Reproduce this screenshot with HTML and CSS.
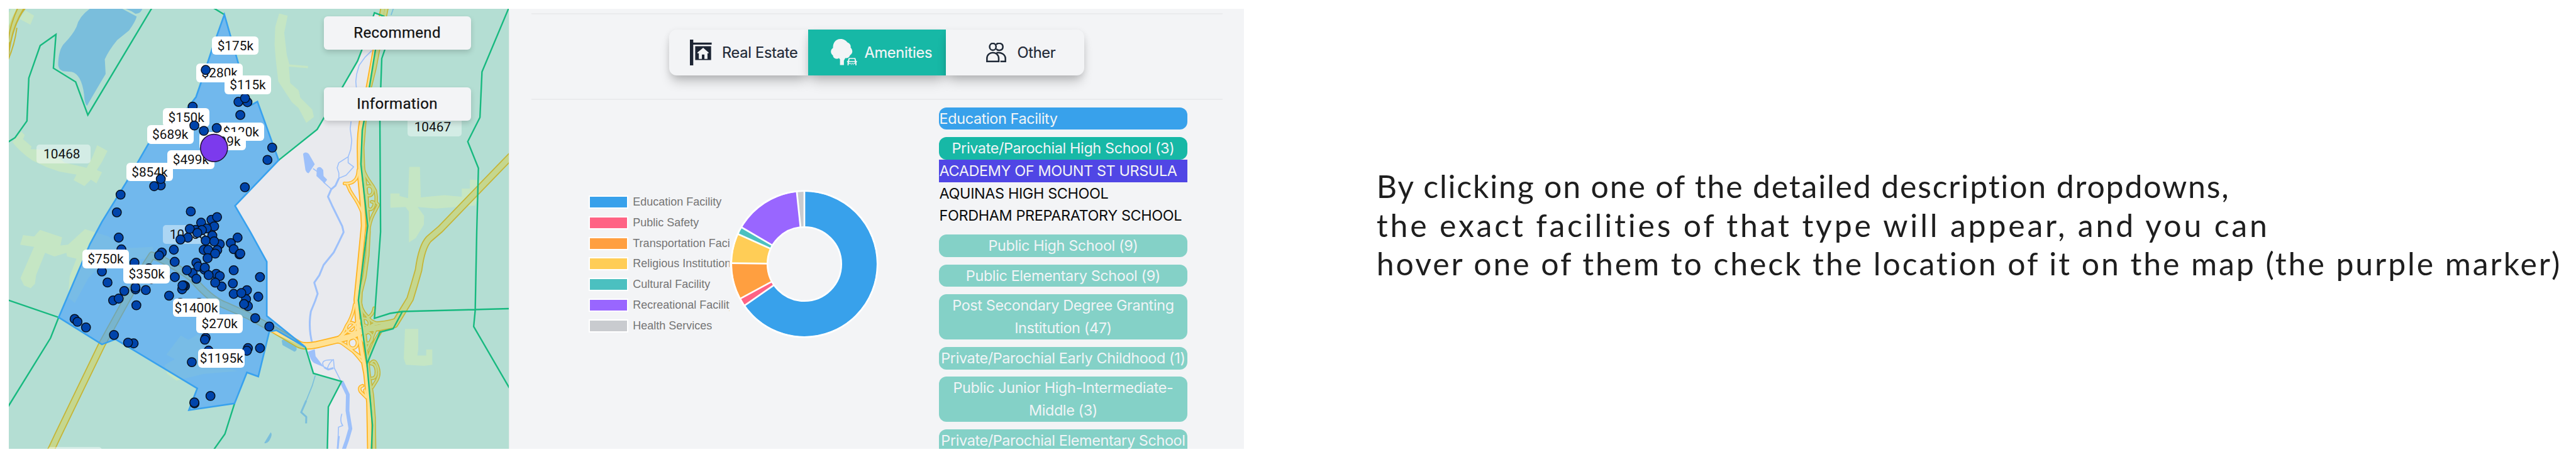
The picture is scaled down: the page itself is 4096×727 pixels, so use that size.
FILE: index.html
```html
<!DOCTYPE html>
<html lang="en">
<head>
<meta charset="utf-8">
<title>Neighborhood amenities</title>
<link rel="stylesheet" href="styles.css">
</head>
<body>
<main class="board">
  <section class="map">
    <svg class="layer" viewBox="51 58 2948 2979" preserveAspectRatio="none">
      <defs>
        <g id="wide">
          <path d="M3020 1045L2595 1550L2527 1617Q2485 1670 2467 1827L2442 1927L2417 2022L2372 2107L2325 2195L2237 2215L2157 2228L2067 2277L1977 2302L1867 2332Q1790 2350 1757 2327L1617 2232L1467 2137L1330 2067Q1240 2030 1130 1880Q1000 1770 895 1727L860 1790L600 2330L340 2947L300 3045"/>
        </g>
        <g id="main">
          <path d="M2260 40L2212 338L2172 590L2132 820Q2119 900 2119 1000L2122 1200Q2140 1400 2143 1527L2122 1777L2100 2027L2112 2227L2132 2377L2157 2527L2175 2727L2180 3045"/>
        </g>
        <g id="side">
          <path d="M2280 40L2227 338L2207 460L2179 590L2147 820L2135 1000L2139 1130L2160 1330L2172 1568L2165 1727L2147 1877L2125 1977L2122 2047L2150 2280L2172 2527L2192 2677L2202 2827L2205 3045"/>
          <path d="M2335 2165Q2280 2185 2230 2188T2160 2250"/>
        </g>
        <g id="ramps">
          <path d="M2030 1240Q2070 1245 2090 1220Q2110 1200 2112 1150M2048 1250Q2060 1290 2085 1330T2132 1430M2142 1150Q2160 1200 2180 1230T2212 1290Q2220 1330 2217 1370L2230 1385L2200 1450Q2178 1500 2172 1568M2190 1365Q2215 1365 2200 1400Q2185 1430 2165 1405"/>
          <ellipse cx="2175" cy="1290" rx="24" ry="33"/>
          <path d="M2090 2060Q2080 2140 2040 2210Q2015 2280 1980 2292M1985 2310Q2050 2320 2132 2445M2115 2170L1990 2300L2132 2420"/>
          <path d="M2120 2020Q2125 2100 2165 2140Q2190 2190 2250 2190T2335 2165M2165 2150Q2200 2130 2205 2085M2170 2420Q2200 2320 2240 2250M2150 2200L2210 2240L2165 2360"/>
          <ellipse cx="2069" cy="2217" rx="28" ry="34"/><ellipse cx="2079" cy="2320" rx="28" ry="36"/>
          <ellipse cx="2147" cy="2188" rx="30" ry="36"/><ellipse cx="2165" cy="2285" rx="30" ry="38"/>
          <path d="M2188 2455Q2205 2430 2218 2460Q2245 2520 2222 2570L2195 2620M2185 2460Q2215 2460 2218 2510Q2220 2560 2190 2560M2137 2610Q2110 2620 2125 2650L2160 2690L2150 2640"/>
        </g>
      </defs>
      <rect class="land" x="51" y="58" width="2948" height="2979"/>
      <g class="patch">
        <path d="M150 70L200 105L178 165L112 125ZM51 85L65 58H100L51 240ZM72 960L125 890L145 912L135 940L185 990L180 1008L225 1010L300 1020L380 1100L510 1135L545 1060L572 982L633 1020L600 1095L570 1150L600 1165L568 1240L535 1215L497 1258L433 1218L450 1180L350 1160L275 1130L190 1085Q110 1020 72 960Z"/>
        <path d="M118 1655L135 1590L200 1600L235 1555L365 1605L355 1660L400 1655L500 1550L555 1570L640 1600L720 1680L900 1670L905 1740L600 1790L520 1880L440 2050L400 2010L410 1870L450 1750L395 1735L390 1710L320 1735L265 1710L212 1860L205 1920L180 1950L140 1930L120 1880L200 1670Z"/>
        <path d="M980 2400L1065 2270L1110 2300L1170 2260L1230 2470L1400 2510L1200 2530L1040 2575L985 2530L970 2470L1030 2430Z"/>
        <path d="M1645 90L1695 105L1675 220L1690 370L1705 435L1815 445V460L1702 450L1710 560L1760 610L1770 660L1840 740L1850 790L1805 830L1760 730L1720 690L1680 620L1640 550L1625 400L1618 300L1622 180Z"/>
        <path d="M2412 1128H2475L2480 1335L2620 1320L2722 1330V1275H2770V1215L2850 1220L2800 1390L2570 1410L2462 1400L2500 1460L2498 1520L2450 1610L2410 1640V1430L2390 1400L2301 1405V1308H2355V1325L2405 1340Z"/>
        <path d="M2387 2225H2465V2365L2460 2405H2512V2365H2548V2468L2500 2475L2392 2468L2380 2425Z"/>
      </g>
      <g class="water">
        <path d="M528 58H720L805 110Q800 140 760 205L690 270Q640 340 617 400L622 500Q580 580 512 715Q497 700 495 640Q480 500 420 485L370 480Q340 465 342 430Q345 330 380 290Q430 230 450 180Q465 110 528 58Z"/>
        <path d="M740 58H838Q830 90 798 92L775 75Z"/>
        <path d="M1786 1040Q1800 1020 1820 1040L1855 1110L1820 1170Q1810 1175 1800 1150ZM1867 1140Q1885 1115 1905 1150L1907 1190L1928 1215L1912 1240L1865 1190Z"/>
        <path d="M1815 2380L1855 2362L1860 2410L1910 2485L1850 2455Q1830 2440 1815 2380ZM1660 2305Q1665 2290 1685 2305L1745 2345Q1755 2370 1735 2380L1665 2335ZM1595 2925Q1610 2940 1585 2985Q1570 3005 1557 2998Z"/>
      </g>
      <g class="stream">
        <path class="thin" d="M2192 340L2152 385L2117 440L2102 500L2097 550L2100 590M2069 820L2064 870L2073 950L2067 1010L2052 1060L1997 1100L1987 1135L1997 1170V1205M2052 1060V1100L2084 1128L2040 1185L1997 1205M1845 1140L1870 1160M1905 1230L1952 1278M2305 100L2318 58M1858 2540L1840 2610L1805 2710M1910 2485Q1880 2430 1960 2435Q1930 2470 1930 2500M1965 2430L1970 2490L2010 2580M2015 2800Q2000 2850 2020 2880L1995 2890L1990 3037"/>
        <path class="mid" d="M1997 1205L1977 1255L1952 1280L1933 1330L1957 1390L2017 1530L2025 1570L1997 1637L1967 1707L1907 1792L1882 1862L1852 1912L1872 1987L1857 2037L1832 2107Q1815 2220 1842 2330M1805 2710L1775 2790L1805 2820L1804 2865M1997 2950L1990 3037M1910 2485L1935 2500L1965 2490"/>
        <path class="thick" d="M2013 2581L2050 2670L2048 2780L2065 2900L2045 2980L2025 3045"/>
      </g>
      <g class="casing"><use href="#ramps" class="w5"/><use href="#wide" class="w12"/><use href="#side" class="w8"/><use href="#main" class="w9"/></g>
      <g class="asphalt"><use href="#ramps" class="n5"/><use href="#wide" class="n12"/><use href="#side" class="n8"/><use href="#main" class="n9"/></g>
      <path class="casing w5" d="M150 40Q65 150 40 400"/>
      <path class="asphalt n12" d="M125 40Q65 150 45 270"/>
      <path class="casing w2" d="M105 50Q55 170 45 300M98 190Q85 300 48 400"/>
      <path class="zones" fill-rule="evenodd" d="M51 58H2999V3037H51Z
        M2202 108L2207 85L2262 108L2212 340L2177 590L2145 820L2135 880L2127 1110L2167 1527L2112 2032L2163 2462L2195 2877L2189 3037H1929L1935 2753L2013 2581L1847 2526L1800 2349L1587 2243L1522 2548L1455 2520L1382 2730L1113 2775L1162 2628L680 2295L600 2330L345 2147L530 1650L600 1500L745 1230L875 970L1105 730L1155 655L1185 555L1250 330L1322 97L1405 430L1440 680L1480 710L1517 686L1642 1083L1869 875L1907 800L2017 590L2107 412L2132 338Z"/>
      <g class="border">
        <path d="M40 965L88 930L158 817L169 527L236 307L329 231L314 460L445 553L517 777L900 42M1240 40L1322 97M40 2027L345 2147L297 2287L45 2755M1382 2730L1325 2937L1255 3050"/>
        <path d="M1642 1083L1869 875L1907 800L2017 590L2107 412L2132 338L2207 85L2262 108L2212 340L2177 590L2145 820L2135 880L2127 1110L2167 1527L2112 2032L2163 2462L2195 2877L2189 3045M1800 2349L1847 2526L2013 2581L1935 2753L1929 3045"/>
        <path d="M2262 108L2285 200L2267 338L2250 395L2244 590L2239 820L2243 1568L2207 2153L2299 2120L2372 2107L3005 2088M2372 2107L2317 2224L2240 2247L2163 2462M3000 50L2841 485L2829 793L2757 957L2820 1137L2810 1568L2801 2100L2792 2209L3005 2630"/>
      </g>
      <path class="selected" d="M1322 97L1405 430L1440 680L1480 710L1517 686L1642 1083L1385 1392L1475 1568L1572 1770V2137L1800 2349L1630 2235L1587 2243L1522 2548L1455 2520L1382 2730L1113 2775L1162 2628L680 2295L600 2330L345 2147L530 1650L600 1500L745 1230L875 970L1105 730L1155 655L1185 555L1250 330Z"/>
    </svg>

    <span class="zip" style="--u:216;--v:981">10468</span>
    <span class="zip" style="--u:2402;--v:796">10467</span>
    <span class="zip" style="--u:960;--v:1525">10458</span>
    <span class="zip" style="--u:280;--v:3026"></span>

    <svg class="layer dots" viewBox="51 58 2948 2979" preserveAspectRatio="none">
      <defs><ellipse id="d" rx="26.5" ry="30.5"/></defs>
      <use href="#d" x="1458" y="690"/><use href="#d" x="1405" y="688"/><use href="#d" x="1444" y="663"/><use href="#d" x="1416" y="777"/><use href="#d" x="1135" y="720"/><use href="#d" x="710" y="1316"/><use href="#d" x="688" y="1436"/><use href="#d" x="1124" y="1430"/><use href="#d" x="1246" y="1486"/><use href="#d" x="1279" y="1468"/><use href="#d" x="1185" y="1506"/><use href="#d" x="1443" y="1266"/><use href="#d" x="1604" y="998"/><use href="#d" x="1576" y="1081"/>
      <use href="#d" x="1152" y="1555"/><use href="#d" x="1118" y="1548"/><use href="#d" x="1262" y="1531"/><use href="#d" x="1218" y="1545"/><use href="#d" x="1190" y="1556"/><use href="#d" x="1163" y="1575"/><use href="#d" x="1107" y="1607"/><use href="#d" x="1063" y="1620"/><use href="#d" x="1251" y="1593"/><use href="#d" x="1212" y="1627"/><use href="#d" x="1295" y="1651"/><use href="#d" x="1262" y="1632"/><use href="#d" x="1200" y="1690"/><use href="#d" x="1280" y="1692"/><use href="#d" x="1227" y="1690"/><use href="#d" x="1268" y="1715"/><use href="#d" x="1223" y="1746"/>
      <use href="#d" x="1400" y="1607"/><use href="#d" x="1360" y="1644"/><use href="#d" x="1377" y="1685"/><use href="#d" x="1411" y="1720"/><use href="#d" x="1416" y="1715"/><use href="#d" x="699" y="1607"/><use href="#d" x="715" y="1687"/><use href="#d" x="1024" y="1689"/><use href="#d" x="953" y="1708"/><use href="#d" x="937" y="1728"/><use href="#d" x="792" y="1777"/><use href="#d" x="877" y="1815"/><use href="#d" x="892" y="1887"/><use href="#d" x="1029" y="1771"/>
      <use href="#d" x="1157" y="1777"/><use href="#d" x="1135" y="1847"/><use href="#d" x="1168" y="1803"/><use href="#d" x="1205" y="1824"/><use href="#d" x="1207" y="1810"/><use href="#d" x="1101" y="1828"/><use href="#d" x="1274" y="1852"/><use href="#d" x="1229" y="1861"/><use href="#d" x="1295" y="1867"/><use href="#d" x="1157" y="1886"/><use href="#d" x="1306" y="1938"/><use href="#d" x="1268" y="1912"/><use href="#d" x="1377" y="1828"/><use href="#d" x="1372" y="1917"/><use href="#d" x="1532" y="1874"/><use href="#d" x="1030" y="1874"/>
      <use href="#d" x="600" y="1836"/><use href="#d" x="633" y="1911"/><use href="#d" x="732" y="1968"/><use href="#d" x="798" y="1957"/><use href="#d" x="798" y="1945"/><use href="#d" x="859" y="1962"/><use href="#d" x="666" y="2032"/><use href="#d" x="699" y="2020"/><use href="#d" x="803" y="2065"/><use href="#d" x="996" y="2000"/><use href="#d" x="1090" y="1935"/><use href="#d" x="1073" y="1957"/><use href="#d" x="1082" y="1930"/><use href="#d" x="1075" y="1931"/>
      <use href="#d" x="1377" y="1988"/><use href="#d" x="1455" y="1963"/><use href="#d" x="1450" y="2024"/><use href="#d" x="1422" y="1982"/><use href="#d" x="1522" y="2007"/><use href="#d" x="1461" y="2071"/><use href="#d" x="1438" y="2057"/><use href="#d" x="1504" y="2152"/><use href="#d" x="1587" y="2209"/><use href="#d" x="439" y="2158"/><use href="#d" x="456" y="2177"/><use href="#d" x="506" y="2215"/><use href="#d" x="671" y="2266"/><use href="#d" x="787" y="2323"/><use href="#d" x="754" y="2318"/>
      <use href="#d" x="1062" y="2049"/><use href="#d" x="1173" y="2049"/><use href="#d" x="1212" y="2285"/><use href="#d" x="1207" y="2298"/><use href="#d" x="1229" y="2372"/><use href="#d" x="1461" y="2355"/><use href="#d" x="1455" y="2373"/><use href="#d" x="1532" y="2355"/><use href="#d" x="1130" y="2450"/><use href="#d" x="1240" y="2679"/><use href="#d" x="1146" y="2729"/><use href="#d" x="1145" y="2723"/>
    </svg>

    <span class="price" style="--u:1250;--v:245">$175k</span>
    <span class="price" style="--u:1157;--v:430">$280k</span>
    <span class="price" style="--u:1323;--v:512">$115k</span>
    <span class="price" style="--u:960;--v:734">$150k</span>
    <span class="price" style="--u:866;--v:848">$689k</span>
    <span class="price" style="--u:1283;--v:829">$120k</span>
    <span class="price" style="--u:1174;--v:892">$599k</span>
    <span class="price" style="--u:987;--v:1019">$499k</span>
    <span class="price" style="--u:744;--v:1102">$854k</span>
    <span class="price" style="--u:485;--v:1692">$750k</span>
    <span class="price" style="--u:727;--v:1793">$350k</span>
    <span class="price" style="--u:1019;--v:2021">$1400k</span>
    <span class="price" style="--u:1157;--v:2129">$270k</span>
    <span class="price" style="--u:1168;--v:2363">$1195k</span>

    <svg class="layer dots" viewBox="51 58 2948 2979" preserveAspectRatio="none">
      <use href="#d" x="1212" y="472"/><use href="#d" x="1145" y="848"/><use href="#d" x="1201" y="884"/><use href="#d" x="1277" y="865"/><use href="#d" x="947" y="1253"/><use href="#d" x="908" y="1259"/><use href="#d" x="947" y="1210"/>
      <ellipse class="focus" cx="1261" cy="1000" rx="80" ry="93"/>
    </svg>

    <div class="map-actions">
      <button class="map-btn">Recommend</button>
      <button class="map-btn">Information</button>
    </div>
  </section>

  <section class="panel">
    <header class="tabs-bar">
      <nav class="tabs">
        <button class="tab tab-estate">
          <svg width="34.6" height="41.4" viewBox="105 128 78 182" preserveAspectRatio="none">
            <path fill="#1c2433" fill-rule="evenodd" d="M105 128H117V149H183V163H117V310H105ZM124 174H181V271H124ZM152.500 185L132 218V224H137V263H148V232H157V263H168V224H172V218Z"/>
          </svg>
          <span>Real Estate</span>
        </button>
        <button class="tab tab-amenities active">
          <svg width="42.2" height="42.5" viewBox="609 125 95 187" preserveAspectRatio="none">
            <path fill="#f3f4f6" d="M644 125C656 125 664 137 668 148C677 154 682 170 680 185C688 200 689 225 678 238C676 252 668 262 661 258L656 277V308H642V268L638 258Q637 265 630 264C622 262 616 250 617 240C607 228 607 200 617 188C616 160 624 125 644 125Z"/>
            <path fill="#f3f4f6" d="M673 258H697L700 279H703V286H667V279H670ZM676 265L675 279H695L694 265ZM669 286H674V293H695V286H701V310H697V299H673V310H669ZM681 293H683V307H681ZM688 293H690V307H688Z" fill-rule="evenodd"/>
          </svg>
          <span>Amenities</span>
        </button>
        <button class="tab tab-other">
          <svg width="32" height="31" viewBox="1167 152 72 136" preserveAspectRatio="none">
            <g fill="none" stroke="#1f2937" stroke-width="2.500">
              <ellipse vector-effect="non-scaling-stroke" cx="1191" cy="180" rx="11.500" ry="24"/>
              <path vector-effect="non-scaling-stroke" d="M1203 165C1210 148 1227 155 1227 180C1227 206 1210 212 1203 195M1170 283V262C1170 208 1212 208 1212 262V283ZM1204 222C1222 216 1236 236 1236 262V283H1218"/>
            </g>
          </svg>
          <span>Other</span>
        </button>
      </nav>
    </header>

    <div class="content">
      <div class="chart">
        <ul class="legend">
          <li><i class="c-edu"></i>Education Facility</li>
          <li><i class="c-safe"></i>Public Safety</li>
          <li><i class="c-trans"></i>Transportation Facility</li>
          <li><i class="c-rel"></i>Religious Institution</li>
          <li><i class="c-cult"></i>Cultural Facility</li>
          <li><i class="c-rec"></i>Recreational Facility</li>
          <li><i class="c-health"></i>Health Services</li>
        </ul>
        <svg class="donut" viewBox="-173 -173 346 346">
          <g fill="none" stroke-width="84" transform="rotate(-90)">
            <circle r="127" pathLength="360" stroke="#38a1eb" stroke-dasharray="235.200 360"/>
            <circle r="127" pathLength="360" stroke="#ff6384" stroke-dasharray="6.400 360" stroke-dashoffset="-235.200"/>
            <circle r="127" pathLength="360" stroke="#ff9f40" stroke-dasharray="29.100 360" stroke-dashoffset="-241.600"/>
            <circle r="127" pathLength="360" stroke="#ffcd56" stroke-dasharray="23.600 360" stroke-dashoffset="-270.700"/>
            <circle r="127" pathLength="360" stroke="#4bc0c0" stroke-dasharray="6 360" stroke-dashoffset="-294.300"/>
            <circle r="127" pathLength="360" stroke="#9966ff" stroke-dasharray="53.700 360" stroke-dashoffset="-300.300"/>
            <circle r="127" pathLength="360" stroke="#c9cbcf" stroke-dasharray="6 360" stroke-dashoffset="-354"/>
          </g>
          <g fill="none" stroke="#fff" stroke-width="4">
            <circle r="170.500"/><circle r="86"/>
            <path d="M0-86V-170"/>
            <path d="M0-86V-170" transform="rotate(235.200)"/><path d="M0-86V-170" transform="rotate(241.600)"/><path d="M0-86V-170" transform="rotate(270.700)"/><path d="M0-86V-170" transform="rotate(294.300)"/><path d="M0-86V-170" transform="rotate(300.300)"/><path d="M0-86V-170" transform="rotate(354)"/>
          </g>
        </svg>
      </div>

      <div class="list">
        <div class="group head">Education Facility</div>
        <div class="group open">Private/Parochial High School (3)</div>
        <ul class="places">
          <li class="hovered">ACADEMY OF MOUNT ST URSULA</li>
          <li>AQUINAS HIGH SCHOOL</li>
          <li>FORDHAM PREPARATORY SCHOOL</li>
        </ul>
        <div class="group">Public High School (9)</div>
        <div class="group">Public Elementary School (9)</div>
        <div class="group">Post Secondary Degree Granting<br>Institution (47)</div>
        <div class="group">Private/Parochial Early Childhood (1)</div>
        <div class="group">Public Junior High-Intermediate-<br>Middle (3)</div>
        <div class="group last">Private/Parochial Elementary School</div>
      </div>
    </div>
  </section>

  <p class="note">
    <span class="l1">By clicking on one of the detailed description dropdowns,</span>
    <span class="l2">the exact facilities of that type will appear, and you can</span>
    <span class="l3">hover one of them to check the location of it on the map (the purple marker)</span>
  </p>
</main>
</body>
</html>
```

FILE: styles.css
```css
* { box-sizing: border-box; }
body { margin: 0; background: #fff; width: 4096px; height: 727px; overflow: hidden; }
ul, p { margin: 0; padding: 0; list-style: none; }
button { border: 0; margin: 0; padding: 0; background: none; }

.board { display: flex; padding: 13.6px 0 0 13.8px; height: 727px; }

/* map */
.map { position: relative; flex: none; width: 795px; height: 700px; overflow: hidden; font-family: Roboto, sans-serif; }
.layer { position: absolute; inset: 0; width: 795px; height: 700px; }
.land { fill: #e9eaee; }
.patch { fill: #fff5da; }
.water { fill: #9dc0fa; }
.stream path { fill: none; stroke: #9dc0fa; vector-effect: non-scaling-stroke; stroke-linejoin: round; }
.stream .thin { stroke-width: 1.6px; }
.stream .mid { stroke-width: 3px; }
.stream .thick { stroke-width: 6px; }
.casing, .asphalt { fill: none; stroke-linejoin: round; stroke-linecap: round; }
.casing { stroke: #ffb31f; }
.asphalt { stroke: #ffe193; }
#wide path, #main path, #side path, #ramps path, #ramps ellipse, .casing, .asphalt { vector-effect: non-scaling-stroke; }
.w12 { stroke-width: 12px; } .n12 { stroke-width: 8.5px; }
.w9 { stroke-width: 9px; } .n9 { stroke-width: 5.5px; }
.w8 { stroke-width: 7px; } .n8 { stroke-width: 4px; }
.w5 { stroke-width: 5.5px; } .n5 { stroke-width: 2.8px; }
.w2 { stroke-width: 2px; }
.zones { fill: #10b981; fill-opacity: .245; }
.border path { fill: none; stroke: #17b97f; stroke-width: 2.4px; vector-effect: non-scaling-stroke; }
.selected { fill: #36a0eb; fill-opacity: .67; stroke: #38a1ee; stroke-width: 2.6px; vector-effect: non-scaling-stroke; }
.dots ellipse { fill: #0044ab; stroke: #06101f; stroke-width: 1.5px; vector-effect: non-scaling-stroke; }
.dots .focus { fill: #7c3aed; stroke: #20123a; }
.price, .zip {
  position: absolute;
  left: calc((var(--u) - 51) * .2697px);
  top: calc((var(--v) - 58) * .2349px);
  height: 29.6px; line-height: 30px; font-size: 20.8px; text-align: center; color: #111;
}
.price { width: 74.3px; background: #fff; border-radius: 6px; }
.zip { width: 86px; padding-right: 6px; background: rgba(255,255,255,.42); border-radius: 5px; }
.map-actions { position: absolute; left: 500.8px; top: 12px; display: flex; flex-direction: column; gap: 59.8px; }
.map-btn { width: 234px; height: 53.4px; border-radius: 6px; background: #f3f4f6; box-shadow: 0 4px 8px rgba(0,0,0,.16); font: 400 24px Roboto, sans-serif; letter-spacing: .35px; color: #111; -webkit-text-stroke: .25px #111; }

/* panel */
.panel { flex: none; width: 1169px; height: 700px; overflow: hidden; background: #f3f4f6; padding: 7.400px 33.500px 0 35px; font-family: Inter, sans-serif; border-left: 1px solid #e4ebe9; }
.tabs-bar { height: 138.2px; border-top: 2px solid #eaebed; border-bottom: 2px solid #eaebed; padding: 24px 0 0 219px; }
.tabs { display: flex; width: 660px; height: 73px; }
.tab { display: flex; align-items: center; height: 73px; background: #f3f4f6; color: #1f2937; font: 400 23.6px Inter, sans-serif; letter-spacing: -.25px; -webkit-text-stroke: .2px currentColor; box-shadow: 0 13px 18px -4px rgba(0,0,0,.22), 0 3px 11px rgba(0,0,0,.09); white-space: nowrap; }
.tab svg { flex: none; }
.tab-estate { width: 221.300px; padding-left: 33.500px; gap: 16px; border-radius: 12px 0 0 12px; }
.tab-amenities { width: 219px; padding-left: 35.600px; gap: 11.500px; }
.tab-other { width: 219.700px; padding-left: 64.300px; gap: 17px; border-radius: 0 12px 12px 0; }
.tab.active { background: #17b8a6; color: #f3f4f6; }

.content { display: flex; justify-content: space-between; padding: 11.400px 56px 0 91px; }
.chart { display: flex; align-items: flex-start; }
.legend { width: 224px; margin-top: 134.800px; overflow: hidden; font: 18px "Liberation Sans", Arial, sans-serif; color: #757575; }
.legend li { display: flex; align-items: center; height: 32.750px; white-space: nowrap; }
.legend i { flex: none; width: 63px; height: 21px; border: 2.500px solid #fff; margin-right: 7.500px; }
.c-edu { background: #38a1eb; } .c-safe { background: #ff6384; } .c-trans { background: #ff9f40; }
.c-rel { background: #ffcd56; } .c-cult { background: #4bc0c0; } .c-rec { background: #9966ff; } .c-health { background: #c9cbcf; }
.donut { width: 236px; height: 236px; margin: 131.400px 0 0 1px; }

.list { width: 395.700px; display: flex; flex-direction: column; font-size: 23.400px; line-height: 35.750px; letter-spacing: -.37px; }
.group { border-radius: 12px; margin-bottom: 11.900px; background: #84d1c7; color: #f0f4f6; text-align: center; white-space: nowrap; }
.group.head { background: #38a1eb; text-align: left; padding-left: 1px; }
.group.open { background: #17b8a6; margin-bottom: 0; }
.group.last { height: 71.5px; }
.places { margin-bottom: 11.900px; color: #0c0c0c; white-space: nowrap; }
.places li { padding-left: 1px; }
.places .hovered { background: #5046e5; color: #f3f4f6; }

/* annotation */
.note { flex: none; margin: 252.500px 0 0 211px; font: 50px/61.400px Lato, sans-serif; color: #1e1e1e; }
.note span { display: block; white-space: nowrap; }
.note .l1 { letter-spacing: 1.8px; }
.note .l2 { letter-spacing: 3.8px; }
.note .l3 { letter-spacing: 2.9px; }
```
